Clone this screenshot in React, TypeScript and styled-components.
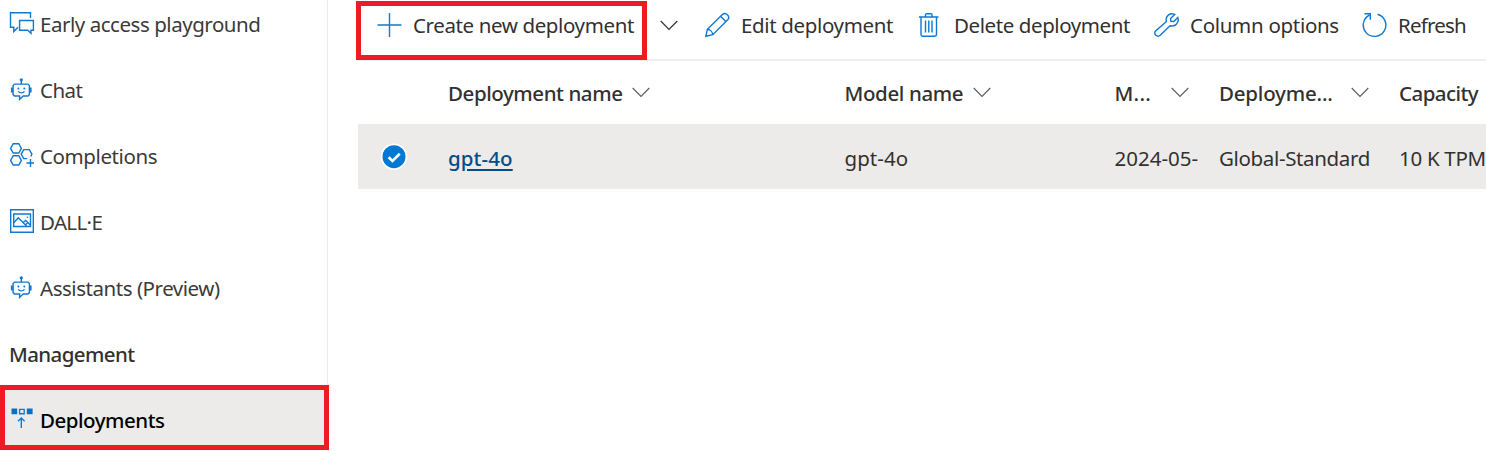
import React from "react";
import styled, { createGlobalStyle } from "styled-components";

const GlobalStyle = createGlobalStyle`
  * { box-sizing: border-box; }
  body {
    margin: 0;
    overflow: hidden;
    background: #fff;
    color: #323130;
    font-family: "Noto Sans", "Segoe UI", sans-serif;
    font-size: 20.5px;
    line-height: 28px;
  }
`;

const Page = styled.div`
  display: flex;
  width: 1486px;
  height: 451px;
  overflow: hidden;
`;

const Sidebar = styled.nav`
  flex: none;
  width: 329px;
  display: flex;
  flex-direction: column;
  padding-right: 1px;
  background: linear-gradient(#ebebeb, #ebebeb) no-repeat 327px 0 / 1px 100%;
`;

const NavItem = styled.a<{ $first?: boolean }>`
  display: flex;
  align-items: center;
  height: ${(p) => (p.$first ? 57 : 66)}px;
  padding: 0 0 ${(p) => (p.$first ? 9 : 0)}px 8px;
  color: #3b3a39;
`;

const NavHeading = styled.h2`
  height: 64px;
  margin: 0;
  padding: 19px 0 0 9px;
  font-size: inherit;
  font-weight: 550;
`;

const SelectedItem = styled.a`
  display: flex;
  align-items: center;
  width: 329px;
  height: 65px;
  padding: 5px 0 0 3px;
  border: 5px solid #ed1c24;
  background: #ecebe9;
  color: #000;
  font-weight: 550;
`;

const Label = styled.span<{ $track: number; $gap?: number }>`
  margin-left: ${(p) => p.$gap ?? 0}px;
  letter-spacing: ${(p) => p.$track}px;
  white-space: pre;
`;

const Icon = styled.svg<{ $color?: string; $weight?: number }>`
  flex: none;
  display: block;
  fill: none;
  stroke: ${(p) => p.$color ?? "#1078d2"};
  stroke-width: ${(p) => p.$weight ?? 1.4};
`;

const Main = styled.main`
  flex: 1;
  min-width: 0;
  margin-left: 27px;
`;

const Toolbar = styled.div`
  display: grid;
  grid-template-columns: 291px 57px 214px 236px 207px 125px;
  height: 61px;
  padding-top: 1px;
  background: linear-gradient(#eeeeee, #eeeeee) no-repeat 2px 59px / 100% 2px;
`;

const Tool = styled.button<{ $framed?: boolean }>`
  display: flex;
  align-items: center;
  height: 59px;
  padding: 0 0 ${(p) => (p.$framed ? 12 : 11)}px ${(p) => (p.$framed ? 15 : 0)}px;
  border: ${(p) => (p.$framed ? "5px solid #ed1c24" : "0")};
  background: none;
  color: inherit;
  font: inherit;
`;

const columns = "90px 396.5px 270px 104.5px 180px 1fr";

const HeaderRow = styled.div`
  display: grid;
  grid-template-columns: ${columns};
  align-items: center;
  height: 63px;
  margin-left: 2px;
  padding-top: 1px;
  font-weight: 550;
`;

const HeaderCell = styled.div<{ $spread?: number }>`
  display: flex;
  align-items: center;
  justify-content: ${(p) => (p.$spread ? "space-between" : "flex-start")};
  padding-right: ${(p) => p.$spread ?? 0}px;
  gap: 10px;
`;

const DataRow = styled.div`
  display: grid;
  grid-template-columns: ${columns};
  align-items: center;
  height: 65px;
  margin-left: 2px;
  padding-top: 3px;
  background: #ecebe9;
`;

const Cell = styled.div`
  overflow: hidden;
  white-space: nowrap;
`;

const CheckCell = styled.div`
  padding: 0 0 3px 22px;
`;

const DeploymentLink = styled.a`
  color: #004e8c;
  font-weight: 550;
  text-decoration: underline;
  text-decoration-thickness: 2px;
  text-underline-offset: 3px;
`;

const ChatIcon = () => (
  <Icon width="28" height="28" viewBox="8 10 28 28">
    <path d="M30.5 18V12.8H10.5V27.3H13.8V31.6L18 27.3" />
    <path d="M19.6 20.5H33.4V30.3H31V33.4L27.8 30.3H19.6Z" />
  </Icon>
);

const BotIcon = () => (
  <Icon width="28" height="28" viewBox="8 75.6 28 28">
    <path d="M21.3 79V83.4M14.5 83.7H28L29.4 85.1V94.2L28 95.6H23.2L19.6 99V95.6H14.5L13.1 94.2V85.1Z" />
    <path d="M18.2 91C19.8 92.9 22.8 92.9 24.5 91" />
    <path d="M11.9 87.2V92M30.6 87.2V92" strokeWidth="2" />
    <g fill="#1078d2" stroke="none">
      <circle cx="21.3" cy="79.4" r="1.6" />
      <circle cx="18.3" cy="88.2" r="1" />
      <circle cx="24.3" cy="88.2" r="1" />
    </g>
  </Icon>
);

const HexagonsIcon = () => (
  <Icon width="28" height="28" viewBox="8 142 28 28">
    <path d="M13.2 143.7H18.8L21.4 148.4L18.8 153H13.2L10.6 148.4Z" />
    <path d="M13.2 155.7H18.8L21.4 160.4L18.8 165H13.2L10.6 160.4Z" />
    <path d="M27 158.6H23.7L21.2 154.1L23.7 149.6H29.3L31.9 154.1L30.8 156.5" />
    <path d="M30.5 159V167M26.5 163H34" />
  </Icon>
);

const PictureIcon = () => (
  <Icon width="28" height="28" viewBox="8 208 28 28">
    <path d="M10.7 209.7H33.3V232.3H10.7Z M13.7 214H30.5V226.5H13.7Z" />
    <path d="M14 222.5L18.3 217.7L26.5 226M23.3 222.6L25.7 220.4L30.3 225M25.3 225L27.5 222.8" />
    <circle cx="27.3" cy="217.3" r=".8" fill="#1078d2" stroke="none" />
  </Icon>
);

const DeployIcon = () => (
  <Icon width="28" height="28" viewBox="8 406 28 28">
    <path d="M11.5 408.5H17.2V414.3H11.5ZM26.8 408.5H32.6V414.3H26.8Z" fill="#106ebe" stroke="none" />
    <path d="M19.6 409.4H24.2V413.8H19.6Z" />
    <path d="M21.3 428V418M18 421.3L21.3 418L24.6 421.3" />
  </Icon>
);

const PlusIcon = () => (
  <Icon width="26" height="26" viewBox="0 0 26 26">
    <path d="M13.5 1V25M1.5 13H25.5" />
  </Icon>
);

const PencilIcon = () => (
  <Icon width="26" height="26" viewBox="704 12 26 26">
    <path d="M705.8 36.3L707.4 29.3L722.4 14.4C725.5 11.6 730.8 16.5 727.7 19.8L712.8 34.7Z" />
    <path d="M707.4 29.3C710 29.5 712.4 31.8 712.8 34.7M720.5 16.3L725.8 21.6" />
  </Icon>
);

const TrashIcon = () => (
  <Icon width="22" height="26" viewBox="918 12 22 26">
    <path d="M919 17H938.5M921 17V34.5Q921 36.2 922.7 36.2H934.8Q936.5 36.2 936.5 34.5V17M925.5 17V14.8Q925.5 13.7 926.6 13.7H930.9Q932 13.7 932 14.8V17" />
    <path d="M925.5 20.5V32.5M928.8 20.5V32.5M932 20.5V32.5" />
  </Icon>
);

const WrenchIcon = () => (
  <Icon width="26" height="26" viewBox="1154 12 26 26">
    <path d="M1174.7 14.4L1170.6 18.5L1170.9 21.3L1173.8 21.6L1177.8 17.5C1179.5 22.5 1175.5 27 1170 25.8L1160.2 35.3C1157.2 37.8 1153.1 34.2 1155.6 31L1166.4 21.4C1165.2 16 1169.8 12.5 1174.7 14.4Z" />
  </Icon>
);

const RefreshIcon = () => (
  <Icon width="26" height="26" viewBox="1361 12 26 26">
    <path d="M1377.5 14.2A11.3 11.3 0 1 1 1369.3 15.1M1364.5 13.8H1370.3V19.8" />
  </Icon>
);

const Chevron = ({ color = "#605e5c" }: { color?: string }) => (
  <Icon $color={color} $weight={1.2} width="18" height="11" viewBox="0 0 18 11">
    <path d="M.7 1L9 9.3L17.3 1" />
  </Icon>
);

const ChevronSlot = styled.span`
  display: flex;
  padding-left: 13px;
`;

const HeaderChevron = styled.span`
  display: flex;
  padding-bottom: 2px;
`;

const CheckBadge = () => (
  <Icon $color="#fff" $weight={2.6} width="28" height="28" viewBox="0 0 28 28">
    <circle cx="14" cy="13.7" r="12.4" fill="#0078d4" strokeWidth="1.8" />
    <path d="M8.6 14.2L12.5 18L19.8 10.8" />
  </Icon>
);

export default function App() {
  return (
    <Page>
      <GlobalStyle />
      <Sidebar>
        <NavItem $first><ChatIcon /><Label $gap={4} $track={-0.46}>Early access playground</Label></NavItem>
        <NavItem><BotIcon /><Label $gap={4} $track={-0.54}>Chat</Label></NavItem>
        <NavItem><HexagonsIcon /><Label $gap={4} $track={-0.4}>Completions</Label></NavItem>
        <NavItem><PictureIcon /><Label $gap={4} $track={-0.65}>DALL·E</Label></NavItem>
        <NavItem><BotIcon /><Label $gap={4} $track={-0.46}>Assistants (Preview)</Label></NavItem>
        <NavHeading><Label $track={-0.6}>Management</Label></NavHeading>
        <SelectedItem><DeployIcon /><Label $gap={4} $track={-0.48}>Deployments</Label></SelectedItem>
      </Sidebar>
      <Main>
        <Toolbar>
          <Tool $framed><PlusIcon /><Label $gap={11} $track={-0.38}>Create new deployment</Label></Tool>
          <Tool><ChevronSlot><Chevron color="#323130" /></ChevronSlot></Tool>
          <Tool><PencilIcon /><Label $gap={11} $track={-0.35}>Edit deployment</Label></Tool>
          <Tool><TrashIcon /><Label $gap={14} $track={-0.41}>Delete deployment</Label></Tool>
          <Tool><WrenchIcon /><Label $gap={10} $track={-0.3}>Column options</Label></Tool>
          <Tool><RefreshIcon /><Label $gap={11} $track={-0.78}>Refresh</Label></Tool>
        </Toolbar>
        <HeaderRow>
          <span />
          <HeaderCell><Label $track={-0.43}>Deployment name</Label><HeaderChevron><Chevron /></HeaderChevron></HeaderCell>
          <HeaderCell><Label $track={-0.38}>Model name</Label><HeaderChevron><Chevron /></HeaderChevron></HeaderCell>
          <HeaderCell $spread={30}><Label $track={0.3}>M...</Label><HeaderChevron><Chevron /></HeaderChevron></HeaderCell>
          <HeaderCell $spread={30}><Label $track={-0.2}>Deployme...</Label><HeaderChevron><Chevron /></HeaderChevron></HeaderCell>
          <HeaderCell><Label $track={-0.55}>Capacity</Label></HeaderCell>
        </HeaderRow>
        <DataRow>
          <CheckCell><CheckBadge /></CheckCell>
          <Cell><DeploymentLink><Label $track={0.1}>gpt-4o</Label></DeploymentLink></Cell>
          <Cell><Label $track={0.05}>gpt-4o</Label></Cell>
          <Cell><Label $track={0}>2024-05-</Label></Cell>
          <Cell><Label $track={-0.35}>Global-Standard</Label></Cell>
          <Cell><Label $track={-0.3}>10 K TPM</Label></Cell>
        </DataRow>
      </Main>
    </Page>
  );
}
